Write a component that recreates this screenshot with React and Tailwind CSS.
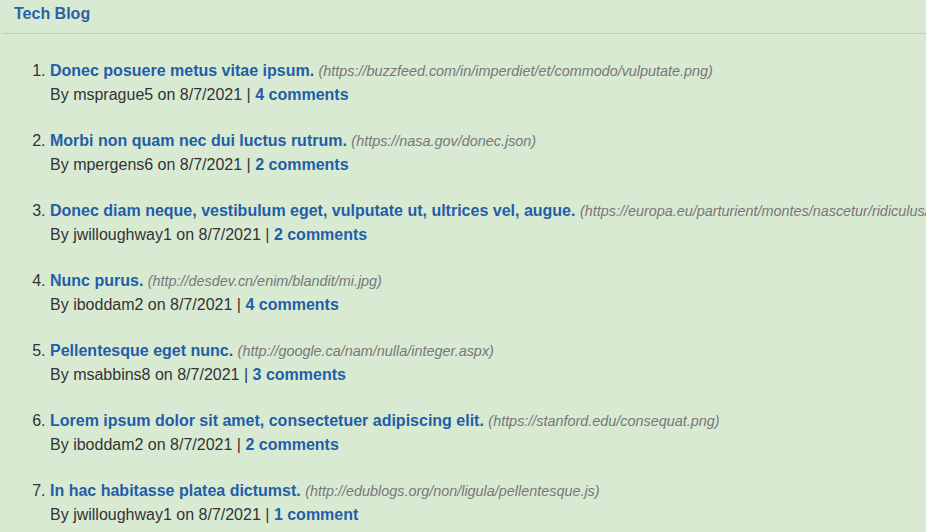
import React from "react";

const posts = [
  { title: "Donec posuere metus vitae ipsum.", url: "https://buzzfeed.com/in/imperdiet/et/commodo/vulputate.png", author: "msprague5", comments: "4 comments" },
  { title: "Morbi non quam nec dui luctus rutrum.", url: "https://nasa.gov/donec.json", author: "mpergens6", comments: "2 comments" },
  { title: "Donec diam neque, vestibulum eget, vulputate ut, ultrices vel, augue.", url: "https://europa.eu/parturient/montes/nascetur/ridiculus/mus.json", author: "jwilloughway1", comments: "2 comments" },
  { title: "Nunc purus.", url: "http://desdev.cn/enim/blandit/mi.jpg", author: "iboddam2", comments: "4 comments" },
  { title: "Pellentesque eget nunc.", url: "http://google.ca/nam/nulla/integer.aspx", author: "msabbins8", comments: "3 comments" },
  { title: "Lorem ipsum dolor sit amet, consectetuer adipiscing elit.", url: "https://stanford.edu/consequat.png", author: "iboddam2", comments: "2 comments" },
  { title: "In hac habitasse platea dictumst.", url: "http://edublogs.org/non/ligula/pellentesque.js", author: "jwilloughway1", comments: "1 comment" },
];

export default function App() {
  return (
    <div className="min-h-[532px] w-[926px] overflow-hidden bg-[#d9ead3] font-['Liberation_Sans',Arial,sans-serif] text-[#333]">
      {/* Header */}
      <div className="ml-[2px] border-b border-[#c3cdc0] pl-3 pt-[4px] h-[34px]">
        <h1 className="text-base font-bold leading-5 text-[#2a62a8]">Tech Blog</h1>
      </div>

      {/* Posts */}
      <ol className="list-decimal pl-[50px] pt-[25px] text-base leading-[23.5px]">
        {posts.map((p, i) => (
          <li key={i} className="mb-[23px] whitespace-nowrap">
            <a className="font-bold text-[#1f5ea8]">{p.title}</a>{" "}
            <span className="text-[14.4px] leading-none italic text-[#777]">({p.url})</span>
            <br />
            By {p.author} on 8/7/2021 |{" "}
            <a className="font-bold text-[#1f5ea8]">{p.comments}</a>
          </li>
        ))}
      </ol>
    </div>
  );
}
